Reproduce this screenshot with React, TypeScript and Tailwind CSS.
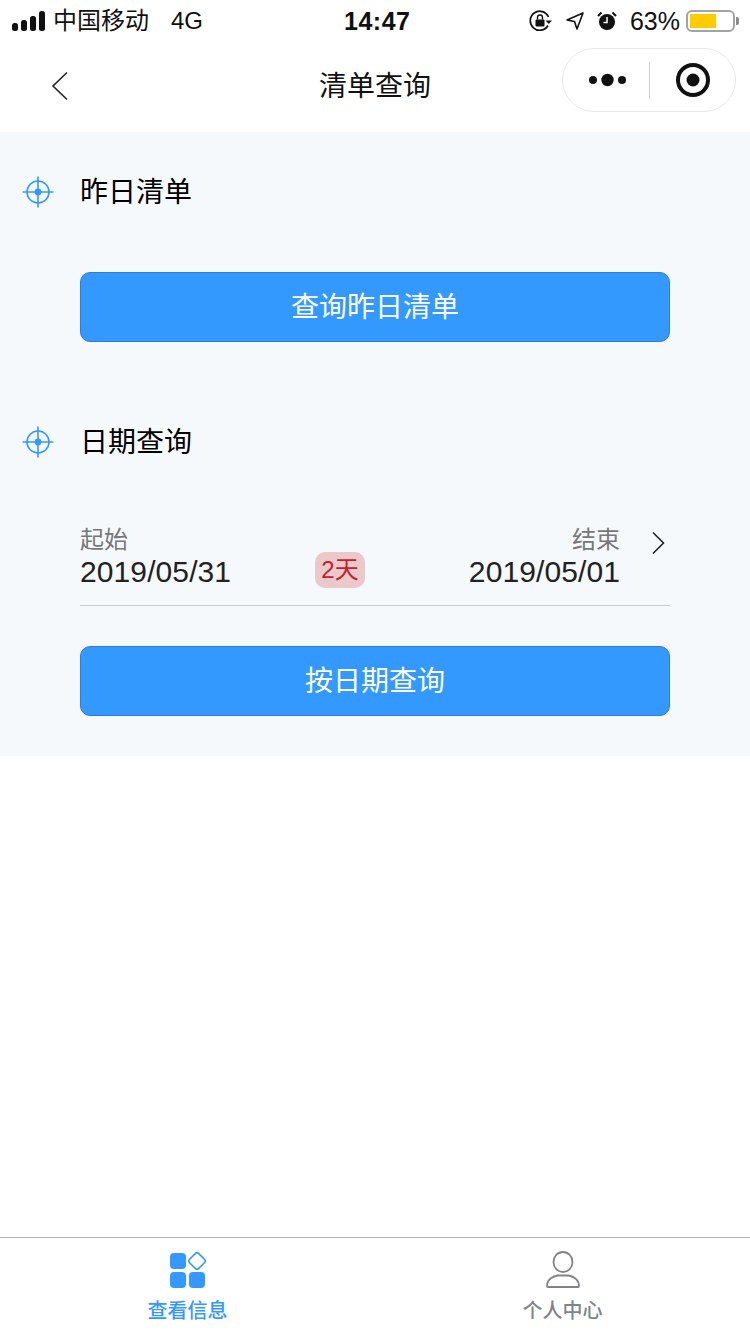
const FONT = "font-['Liberation_Sans','Noto_Sans_CJK_SC',sans-serif]";

function TargetIcon() {
  return (
    <svg className="mt-[1px]" width="34" height="34" viewBox="0 0 34 34" fill="none" stroke="#3399ff" strokeWidth="1.6" aria-hidden="true">
      <circle cx="17" cy="17" r="11" />
      <path d="M17 1.500v31M1.500 17h31" />
      <circle cx="17" cy="17" r="3.400" fill="#3399ff" stroke="none" />
    </svg>
  );
}

function SectionTitle({ title }: { title: string }) {
  return (
    <div className="flex h-[100px] items-center pl-[21px]">
      <TargetIcon />
      <span className="ml-[25px] mt-[3px] text-[28px] leading-none text-black">{title}</span>
    </div>
  );
}

function PrimaryButton({ label }: { label: string }) {
  return (
    <button
      type="button"
      className="mx-[80px] flex h-[70px] w-[590px] items-center justify-center rounded-[10px] border border-[#2b7fd6] bg-[#3399ff] pt-[2px] text-[28px] text-white"
    >
      {label}
    </button>
  );
}

function StatusBar() {
  return (
    <div className="relative flex h-[42px] items-center pl-[12px] pr-[11px] text-[24px] leading-none text-[#111]">
      <svg width="34" height="20" viewBox="0 0 34 20" fill="#111" aria-hidden="true">
        <rect x="0" y="12" width="6" height="8" rx="2.5" />
        <rect x="9" y="9" width="6" height="11" rx="2.5" />
        <rect x="18" y="5" width="6" height="15" rx="2.5" />
        <rect x="27" y="0" width="6" height="20" rx="2.5" />
      </svg>
      <span className="ml-[7px]">中国移动</span>
      <span className="ml-[22px]">4G</span>
      <span className="absolute left-[344px] text-[25px] font-bold tracking-[0.5px]">14:47</span>
      <div className="ml-auto flex items-center">
        <svg width="24" height="22" viewBox="0 0 24 22" fill="none" aria-hidden="true">
          <path d="M19.5 7A9.5 9.5 0 1 0 19 15.5" stroke="#111" strokeWidth="1.7" />
          <path d="M16.5 10.5h6.5l-3.2 3.4z" fill="#111" />
          <rect x="6.5" y="9.5" width="9" height="7" rx="1" fill="#111" />
          <path d="M8.5 9.5V7.5a2.5 2.5 0 0 1 5 0v2" stroke="#111" strokeWidth="1.4" />
        </svg>
        <svg className="ml-[12px]" width="20" height="20" viewBox="0 0 20 20" fill="none" aria-hidden="true">
          <path d="M18 2 2 9l7.5 1.5L12 18z" stroke="#111" strokeWidth="1.6" strokeLinejoin="round" />
        </svg>
        <svg className="ml-[12px]" width="20" height="20" viewBox="0 0 20 20" aria-hidden="true">
          <circle cx="10" cy="11" r="8" fill="#111" />
          <path d="M10 6v5.5H6.5" stroke="#fff" strokeWidth="1.5" fill="none" />
          <path d="M1 5l3.5-3.5M19 5l-3.5-3.5" stroke="#111" strokeWidth="2" />
        </svg>
        <span className="ml-[13px] text-[25px]">63%</span>
        <div className="ml-[6px] flex h-[22px] w-[49px] items-center rounded-[6px] border-2 border-[#a3a3a3] pl-[2px]">
          <div className="h-[14px] w-[26px] bg-[#ffcc00]" />
        </div>
        <div className="ml-[1px] h-[8px] w-[3px] rounded-r-[2px] bg-[#8a8a8a]" />
      </div>
    </div>
  );
}

function NavBar() {
  return (
    <div className="relative flex h-[90px] items-center">
      <svg className="mb-[3px] ml-[51px]" width="18" height="30" viewBox="0 0 18 30" fill="none" stroke="#222" strokeWidth="1.6" aria-hidden="true">
        <path d="M16 1.5 2 15l14 13.5" />
      </svg>
      <span className="absolute left-0 right-0 top-[31px] text-center text-[28px] leading-none text-[#111]">清单查询</span>
      <div className="absolute left-[562px] top-[6px] flex h-[64px] w-[174px] items-center rounded-full border border-[#e8e8e8] bg-white">
        <svg className="ml-[26px]" width="38" height="14" viewBox="0 0 38 14" fill="#111" aria-hidden="true">
          <circle cx="4" cy="7" r="4" />
          <circle cx="18.500" cy="7" r="6.200" />
          <circle cx="33" cy="7" r="4" />
        </svg>
        <div className="ml-[22px] h-[37px] w-px bg-[#cfcfcf]" />
        <svg className="ml-[25px]" width="36" height="36" viewBox="0 0 36 36" aria-hidden="true">
          <circle cx="18" cy="18" r="15" fill="none" stroke="#111" strokeWidth="4" />
          <circle cx="18" cy="18" r="6.500" fill="#111" />
        </svg>
      </div>
    </div>
  );
}

function DateRange() {
  return (
    <div className="mx-[80px] mt-[34px] flex h-[81px] w-[590px] items-start border-b border-[#c8cbd0]">
      <div className="w-[235px]">
        <div className="text-[24px] leading-[30px] text-[#777]">起始</div>
        <div className="text-[30px] leading-[34px] tracking-[0.1px] text-[#222]">2019/05/31</div>
      </div>
      <div className="mt-[27px] flex h-[36px] w-[50px] items-center justify-center rounded-[10px] bg-[#ebc8ca] text-[24px] leading-none text-[#c5202c]">
        2天
      </div>
      <div className="ml-auto text-right">
        <div className="text-[24px] leading-[30px] text-[#777]">结束</div>
        <div className="text-[30px] leading-[34px] tracking-[0.1px] text-[#222]">2019/05/01</div>
      </div>
      <svg className="ml-[31px] mr-[5px] mt-[6px]" width="14" height="24" viewBox="0 0 14 24" fill="none" stroke="#222" strokeWidth="1.6" aria-hidden="true">
        <path d="M2 1.500 12.500 12 2 22.500" />
      </svg>
    </div>
  );
}

function TabBar() {
  return (
    <div className="flex h-[97px] border-t border-[#b4b4b4] bg-white">
      <div className="flex w-[375px] flex-col items-center">
        <svg className="mt-[13px]" width="38" height="38" viewBox="0 0 38 38" fill="#3399ff" aria-hidden="true">
          <rect x="1" y="2" width="16" height="16" rx="4" />
          <rect x="1" y="21" width="16" height="16" rx="4" />
          <rect x="20" y="21" width="16" height="16" rx="4" />
          <rect x="21.500" y="3.500" width="13" height="13" rx="2.500" transform="rotate(45 28 10)" fill="none" stroke="#3399ff" strokeWidth="1.600" />
        </svg>
        <span className="mt-[9px] text-[20px] font-medium leading-[26px] text-[#3399ff]">查看信息</span>
      </div>
      <div className="flex w-[375px] flex-col items-center">
        <svg className="mt-[13px]" width="38" height="38" viewBox="0 0 38 38" fill="none" stroke="#808488" strokeWidth="1.800" aria-hidden="true">
          <ellipse cx="19" cy="11" rx="9.500" ry="10" />
          <path d="M3 35c0-7 7-10 10.500-10.500h11C28 25 35 28 35 35c0 .8-.5 1-1 1H4c-.5 0-1-.2-1-1z" />
        </svg>
        <span className="mt-[9px] text-[20px] font-medium leading-[26px] text-[#808488]">个人中心</span>
      </div>
    </div>
  );
}

export default function App() {
  return (
    <div className={`flex min-h-[1334px] flex-col bg-white ${FONT}`}>
      <StatusBar />
      <NavBar />
      <div className="bg-[#f6f9fc] pb-[40px] pt-[9px]">
        <SectionTitle title="昨日清单" />
        <div className="mt-[31px]">
          <PrimaryButton label="查询昨日清单" />
        </div>
        <div className="mt-[49px]">
          <SectionTitle title="日期查询" />
        </div>
        <DateRange />
        <div className="mt-[40px]">
          <PrimaryButton label="按日期查询" />
        </div>
      </div>
      <div className="flex-1" />
      <TabBar />
    </div>
  );
}
